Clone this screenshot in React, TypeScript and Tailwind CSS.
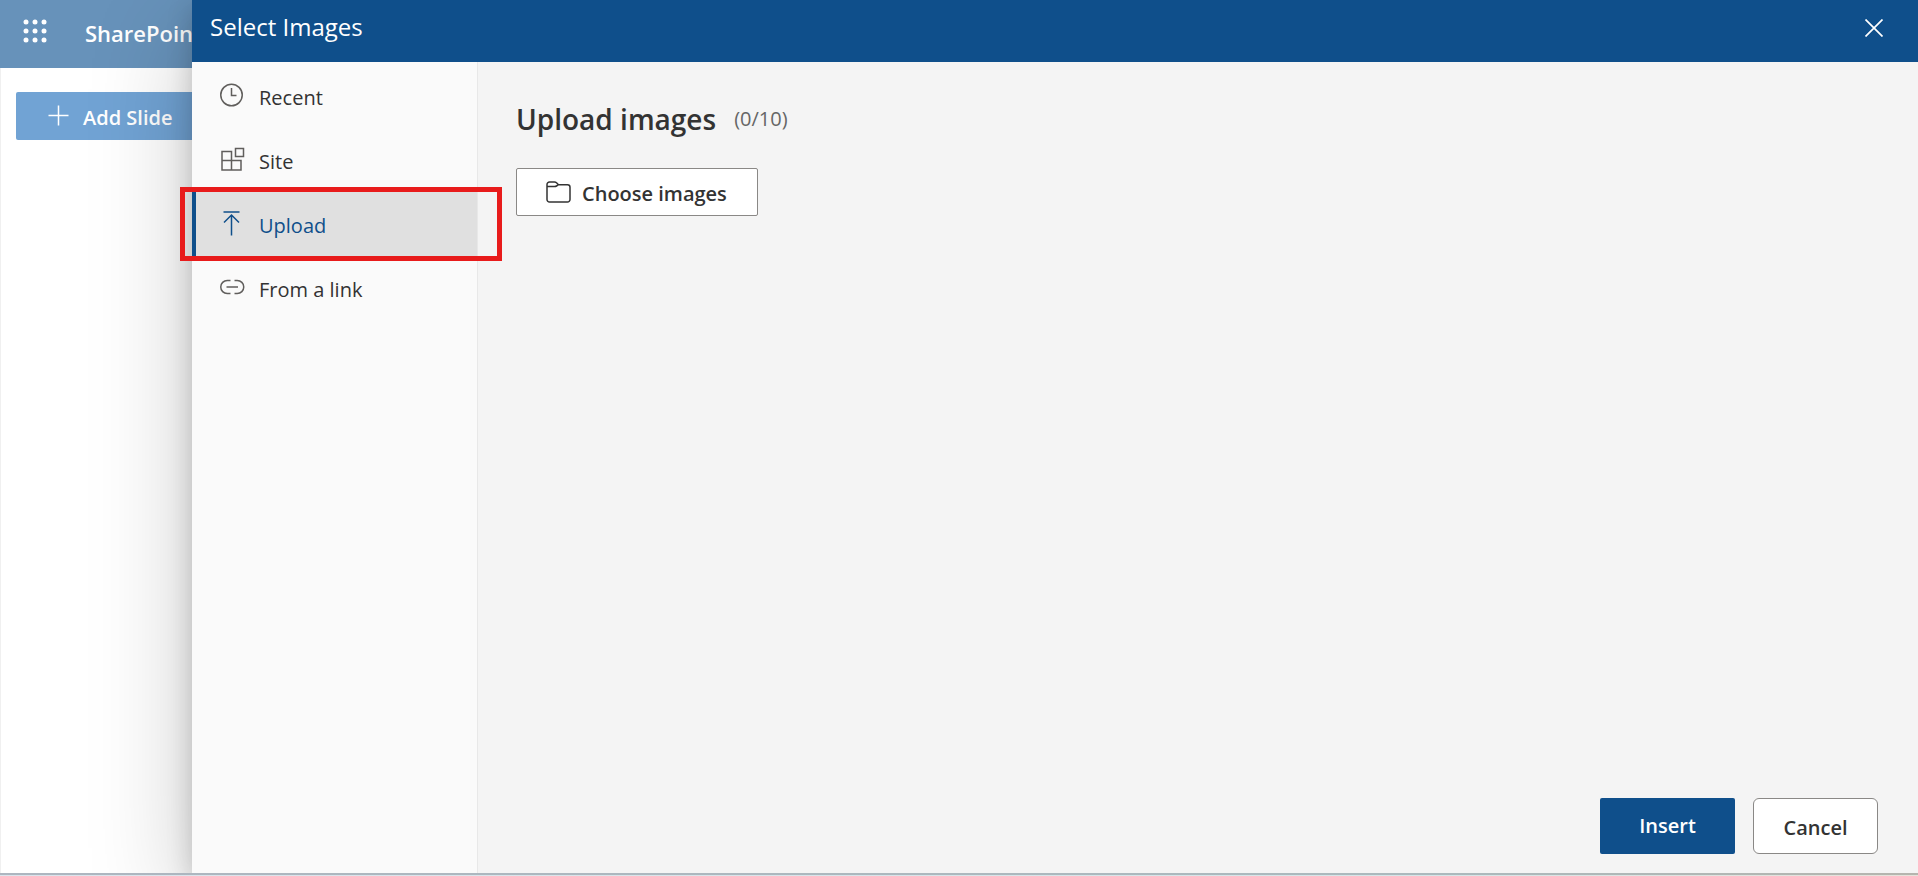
import type { ReactNode } from 'react'

const sources: { label: string; icon: ReactNode; active?: boolean }[] = [
  {
    label: 'Recent',
    icon: (
      <>
        <circle cx="11.500" cy="12" r="10.750" />
        <path d="M11.500 5v7.500h5" />
      </>
    ),
  },
  {
    label: 'Site',
    icon: <path d="M2 4.500h9.500v18.500h-9.500zM2 13.500h19v9.500h-19zM15.500 1.500h8v8h-8z" />,
  },
  {
    label: 'Upload',
    active: true,
    icon: <path d="M3.500 1h16M11.500 24.500V4M4 11.500L11.500 4l7.500 7.500" />,
  },
  {
    label: 'From a link',
    icon: (
      <path d="M10.500 5.500H7.250a6.500 6.500 0 0 0 0 13h3.250M14.500 5.500h2.750a6.500 6.500 0 0 1 0 13H14.500M6.500 12h11.500" />
    ),
  },
]

function SourceItem({ label, icon, active }: (typeof sources)[number]) {
  return (
    <li className="relative">
      <a
        href="#"
        aria-current={active ? 'page' : undefined}
        className={
          active
            ? 'flex h-16 items-center gap-[14px] border-l-4 border-[#0f4f8b] bg-[#e0e0e0] pt-1 pl-6 text-xl text-[#0f4f8b]'
            : 'flex h-16 items-center gap-[14px] border-l-4 border-transparent pt-1 pl-6 text-xl text-[#333]'
        }
      >
        <svg
          viewBox="0 0 25 25"
          className={active ? 'mb-1.5 size-[25px]' : 'mb-1.5 size-[25px] text-[#605e5c]'}
          fill="none"
          stroke="currentColor"
          strokeWidth="1.500"
          aria-hidden="true"
        >
          {icon}
        </svg>
        {label}
      </a>
      {active && (
        <span className="pointer-events-none absolute -top-[5px] -right-[25px] -bottom-[5px] -left-3 z-10 border-[5px] border-[#e81b1b]" />
      )}
    </li>
  )
}

export default function App() {
  return (
    <div className="flex h-screen flex-col font-['Open_Sans',sans-serif] text-[#333]">
      <div className="flex min-h-0 flex-1">
        <div className="flex w-48 shrink-0 flex-col overflow-hidden bg-white">
          <header className="flex h-[68px] shrink-0 items-center bg-[#6792ba] pb-0.5 pl-[23px] text-white">
            <button type="button" aria-label="App launcher" className="mb-1">
              <svg viewBox="0 0 24 24" className="size-6" fill="currentColor" aria-hidden="true">
                {[3, 12, 21].map((y) =>
                  [3, 12, 21].map((x) => <circle key={`${x}-${y}`} cx={x} cy={y} r="2.500" />),
                )}
              </svg>
            </button>
            <span className="ml-[38px] text-[22px] font-semibold whitespace-nowrap">SharePoint</span>
          </header>
          <div className="flex-1 border-l border-[#f0f0f0] pt-6 pl-[15px]">
            <button
              type="button"
              className="flex h-12 w-[190px] items-center gap-[14px] rounded-xs bg-[#71a3d4] pt-1 pl-8 text-xl font-semibold whitespace-nowrap text-white"
            >
              <svg viewBox="0 0 21 21" className="mb-1.5 size-[21px]" stroke="currentColor" strokeWidth="1.500" aria-hidden="true">
                <path d="M10.500 0.500v20M0.500 10.500h20" />
              </svg>
              Add Slide
            </button>
          </div>
        </div>

        <section
          role="dialog"
          aria-label="Select Images"
          className="relative flex min-w-0 flex-1 flex-col bg-[#f4f4f4] shadow-[0_32px_96px_rgba(0,0,0,0.22),0_6px_24px_rgba(0,0,0,0.18)]"
        >
          <header className="flex h-[62px] shrink-0 items-center justify-between bg-[#0f4f8b] pr-[35px] pb-2 pl-[18px] text-white">
            <h1 className="text-2xl">Select Images</h1>
            <button type="button" aria-label="Close" className="pt-0.5">
              <svg viewBox="0 0 18 18" className="size-[18px]" stroke="currentColor" strokeWidth="1.700" aria-hidden="true">
                <path d="M0.500 0.500l17 17M17.500 0.500l-17 17" />
              </svg>
            </button>
          </header>
          <div className="flex min-h-0 flex-1">
            <nav aria-label="Image sources" className="w-[286px] shrink-0 border-r border-[#e8e8e8] bg-[#fafafa] pt-0.5">
              <ul>
                {sources.map((source) => (
                  <SourceItem key={source.label} {...source} />
                ))}
              </ul>
            </nav>
            <main className="flex min-w-0 flex-1 flex-col justify-between pt-9 pr-10 pb-[19px] pl-[38px]">
              <div>
                <div className="flex h-11 items-center gap-[18px] pb-0.5">
                  <h2 className="text-[28px] font-semibold">Upload images</h2>
                  <span className="text-xl text-[#666]">(0/10)</span>
                </div>
                <button
                  type="button"
                  className="mt-[26px] flex h-12 w-[242px] items-center gap-[11px] rounded-xs border border-[#8a8886] bg-white pt-1 pl-[29px] text-xl font-semibold"
                >
                  <svg viewBox="0 0 25 22" className="mb-1 h-[22px] w-[25px]" fill="none" stroke="currentColor" strokeWidth="1.500" aria-hidden="true">
                    <path d="M1 5.500V18.500a2.500 2.500 0 0 0 2.500 2.500H21.500a2.500 2.500 0 0 0 2.500-2.500V6.200a2.500 2.500 0 0 0-2.500-2.500H12.500L10.500 1.700Q9.700 1 8.500 1H3.500A2.500 2.500 0 0 0 1 3.500V5.500H8.500Q9.700 5.500 10.500 5L12.500 3.700" />
                  </svg>
                  Choose images
                </button>
              </div>
              <div className="flex justify-end gap-[18px]">
                <button type="button" className="h-14 w-[135px] rounded-xs bg-[#0f4f8b] text-xl font-semibold text-white">
                  Insert
                </button>
                <button type="button" className="h-14 w-[125px] rounded-md border border-[#8a8886] bg-white pt-1 text-xl font-semibold">
                  Cancel
                </button>
              </div>
            </main>
          </div>
        </section>
      </div>
      <footer className="relative shrink-0">
        <div className="h-0.5 bg-linear-to-r from-[#adb6c0] via-[#abb9bd] via-75% to-[#b5b5ae]" />
        <div className="h-px bg-linear-to-r from-[#dbe4ec] via-[#d5e6e8] via-75% to-[#e6e2da]" />
      </footer>
    </div>
  )
}
